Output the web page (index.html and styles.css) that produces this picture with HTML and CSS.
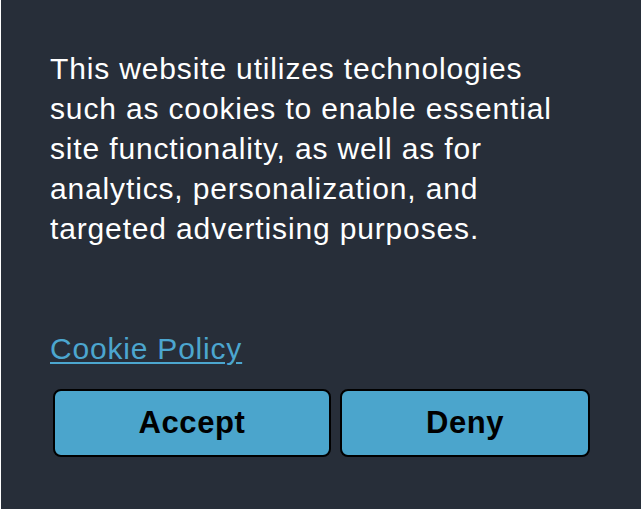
FILE: index.html
```html
<!DOCTYPE html>
<html lang="en">
<head>
<meta charset="utf-8">
<title>Cookie consent</title>
<link rel="stylesheet" href="styles.css">
</head>
<body>
<div class="banner">
  <p class="message">This website utilizes technologies such as cookies to enable essential site functionality, as well as for analytics, personalization, and targeted advertising purposes.</p>
  <a class="policy" href="#">Cookie Policy</a>
  <div class="actions">
    <button class="btn btn-accept">Accept</button>
    <button class="btn btn-deny">Deny</button>
  </div>
</div>
</body>
</html>
```
FILE: styles.css
```css
html, body {
  margin: 0;
  padding: 0;
  background: #ffffff;
}
body {
  font-family: "Liberation Sans", Arial, Helvetica, sans-serif;
}
.banner {
  box-sizing: border-box;
  width: 640px;
  height: 509px;
  margin-left: 1px;
  background: #272e39;
  padding: 49px 20px 0 49px;
  display: flex;
  flex-direction: column;
}
.message {
  margin: 0;
  color: #ffffff;
  font-size: 30px;
  line-height: 40px;
  letter-spacing: 0.85px;
  width: 545px;
}
.policy {
  margin-top: 80px;
  align-self: flex-start;
  color: #4ca6cf;
  font-size: 30px;
  line-height: 40px;
  letter-spacing: 0.8px;
  text-decoration: underline;
  text-decoration-thickness: 2px;
  text-underline-offset: 3px;
}
.actions {
  display: flex;
  gap: 9px;
  margin-top: 20px;
  margin-left: 3px;
}
.btn {
  box-sizing: border-box;
  height: 68px;
  background: #4ba5cc;
  border: 2px solid #000000;
  border-radius: 8px;
  color: #000000;
  font-family: "Liberation Sans", Arial, Helvetica, sans-serif;
  font-weight: bold;
  font-size: 31px;
  letter-spacing: 0.6px;
  padding: 0;
}
.btn-accept { width: 278px; }
.btn-deny { width: 250px; }
```
